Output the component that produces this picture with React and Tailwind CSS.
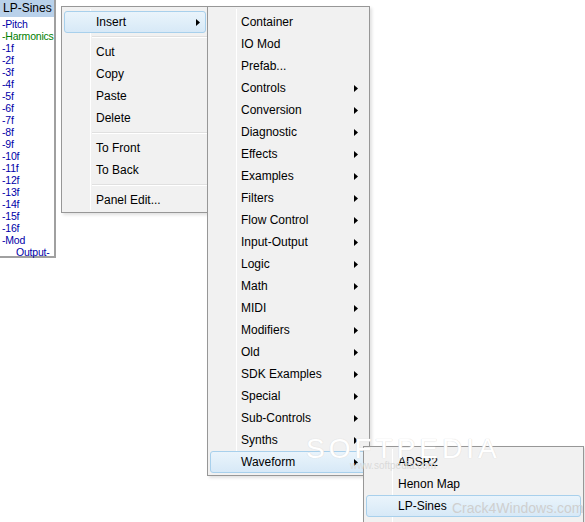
import React from "react";

const Arrow = () => (
  <svg width="4" height="7" viewBox="0 0 4 7" className="block">
    <path d="M0 0 L4 3.5 L0 7 Z" fill="#000" />
  </svg>
);

function Item({ label, arrow, hl, textLeft, arrowRight }) {
  return (
    <div className="relative h-[22px] flex items-center">
      {hl && (
        <div className="absolute inset-y-0 left-[2px] right-[2px] rounded-[3px] border border-[#a8d0ec] bg-gradient-to-b from-[#eaf4fb] to-[#d7e9f7]" />
      )}
      <span className="relative" style={{ paddingLeft: textLeft }}>{label}</span>
      {arrow && (
        <span className="absolute top-[8px]" style={{ right: arrowRight }}>
          <Arrow />
        </span>
      )}
    </div>
  );
}

function Sep({ gutter }) {
  return (
    <div className="h-[8px] flex items-center" style={{ paddingLeft: gutter }}>
      <div className="w-full border-t border-[#e0e0e0] border-b border-b-white" />
    </div>
  );
}

function Menu({ className, gutter, children }) {
  return (
    <div
      className={
        "absolute border border-[#979797] bg-[#f1f1f1] shadow-[2px_2px_3px_rgba(0,0,0,0.12)] pt-[4px] pb-[3px] flex flex-col " +
        className
      }
    >
      <div
        className="absolute top-[2px] bottom-[2px] w-[1px] bg-[#e2e3e3] border-r border-white"
        style={{ left: gutter }}
      />
      <div className="relative flex flex-col">{children}</div>
    </div>
  );
}

export default function App() {
  const rows = [
    ["-Pitch", "#0000a8", 2],
    ["-Harmonics", "#008000", 2],
    ...Array.from({ length: 16 }, (_, i) => [`-${i + 1}f`, "#0000a8", 2]),
    ["-Mod", "#0000a8", 2],
    ["Output-", "#0000a8", 16],
  ];
  const m2 = [
    ["Container"], ["IO Mod"], ["Prefab..."], ["Controls", 1], ["Conversion", 1],
    ["Diagnostic", 1], ["Effects", 1], ["Examples", 1], ["Filters", 1],
    ["Flow Control", 1], ["Input-Output", 1], ["Logic", 1], ["Math", 1],
    ["MIDI", 1], ["Modifiers", 1], ["Old", 1], ["SDK Examples", 1],
    ["Special", 1], ["Sub-Controls", 1], ["Synths", 1], ["Waveform", 1, 1],
  ];
  return (
    <div
      className="relative w-[585px] h-[522px] bg-white overflow-hidden text-[12px] text-black"
      style={{ fontFamily: '"Liberation Sans", Arial, sans-serif' }}
    >
      {/* left panel */}
      <div className="absolute left-0 top-0 w-[56px] h-[258px] border-r-2 border-b-2 border-[#a0a0a0] bg-white flex flex-col">
        <div className="h-[17px] bg-[#b9d1ea] pl-[3px] text-[12px] leading-[17px] text-black">LP-Sines</div>
        <div className="pt-[1px] flex flex-col">
          {rows.map(([t, c, pl]) => (
            <div
              key={t}
              className="h-[12px] leading-[12px] text-[10.5px] tracking-[-0.2px]"
              style={{ color: c, paddingLeft: pl }}
            >
              {t}
            </div>
          ))}
        </div>
      </div>

      {/* menu 1 */}
      <Menu className="left-[61px] top-[6px] w-[148px] h-[207px]" gutter={28}>
        <Item label="Insert" arrow hl textLeft={34} arrowRight={8} />
        <Sep gutter={30} />
        <Item label="Cut" textLeft={34} />
        <Item label="Copy" textLeft={34} />
        <Item label="Paste" textLeft={34} />
        <Item label="Delete" textLeft={34} />
        <Sep gutter={30} />
        <Item label="To Front" textLeft={34} />
        <Item label="To Back" textLeft={34} />
        <Sep gutter={30} />
        <Item label="Panel Edit..." textLeft={34} />
      </Menu>

      {/* menu 2 */}
      <Menu className="left-[207px] top-[6px] w-[163px] h-[470px]" gutter={28}>
        {m2.map(([t, a, h]) => (
          <Item key={t} label={t} arrow={!!a} hl={!!h} textLeft={33} arrowRight={11} />
        ))}
      </Menu>

      {/* menu 3 */}
      <Menu className="left-[363px] top-[446px] w-[221px] h-[90px]" gutter={28}>
        <Item label="ADSR2" textLeft={34} />
        <Item label="Henon Map" textLeft={34} />
        <Item label="LP-Sines" hl textLeft={34} />
      </Menu>

      {/* watermarks */}
      <div
        className="absolute left-[306px] top-[428px] text-[28px] tracking-[4px] text-white pointer-events-none"
        style={{ textShadow: "0 0 1px #dcdcdc, 0 0 1px #dcdcdc" }}
      >
        SOFTPEDIA
      </div>
      <div className="absolute left-[350px] top-[458px] text-[10px] text-[#dadada] pointer-events-none">
        www.softpedia.com
      </div>
      <div className="absolute left-[452px] top-[498px] text-[14px] text-[#cfcfcf] pointer-events-none whitespace-nowrap">
        Crack4Windows.com
      </div>
    </div>
  );
}
